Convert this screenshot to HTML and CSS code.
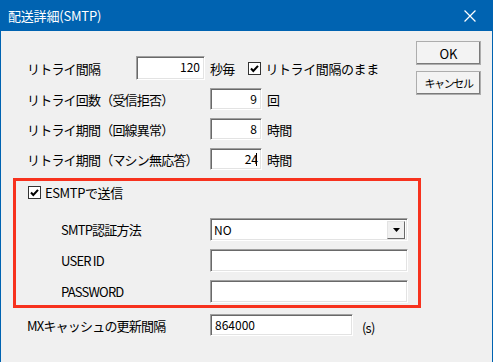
FILE: index.html
```html
<!DOCTYPE html>
<html lang="ja">

<head>
    <meta charset="UTF-8" />
    <title>配送詳細(SMTP)</title>
    <link rel="stylesheet" href="styles.css">
</head>

<body>
    <div class="window">
        <div class="titlebar">
            <span class="title">配送詳細(SMTP)</span>
            <svg class="close" width="11" height="11" viewBox="0 0 11 11">
                <path d="M0.5 0.5 L10.5 10.5 M10.5 0.5 L0.5 10.5" stroke="#fff" stroke-width="1.1" fill="none" />
            </svg>
        </div>

        <div class="content">
            <div class="top">
                <div class="rows">
                    <div class="row r1">
                        <span class="lbl w1">リトライ間隔</span>
                        <div class="field f1">120</div>
                        <span class="unit">秒毎</span>
                        <span class="check keep">
                            <svg width="13" height="13" viewBox="0 0 13 13">
                                <rect x="0.5" y="0.5" width="12" height="12" fill="#fff" stroke="#333" />
                                <path d="M3 6.5 L5.3 9 L10 3.8" stroke="#000" stroke-width="2" fill="none" />
                            </svg>
                            リトライ間隔のまま
                        </span>
                    </div>
                    <div class="row">
                        <span class="lbl w2">リトライ回数（受信拒否）</span>
                        <div class="field f2">9</div>
                        <span class="unit">回</span>
                    </div>
                    <div class="row">
                        <span class="lbl w2">リトライ期間（回線異常）</span>
                        <div class="field f2">8</div>
                        <span class="unit">時間</span>
                    </div>
                    <div class="row">
                        <span class="lbl w2">リトライ期間（マシン無応答）</span>
                        <div class="field f2">24<span class="caret"></span></div>
                        <span class="unit">時間</span>
                    </div>
                </div>

                <div class="buttons">
                    <button class="btn">OK</button>
                    <button class="btn small">キャンセル</button>
                </div>
            </div>

            <div class="esmtp">
                <span class="check">
                    <svg width="13" height="13" viewBox="0 0 13 13">
                        <rect x="0.5" y="0.5" width="12" height="12" fill="#fff" stroke="#333" />
                        <path d="M3 6.5 L5.3 9 L10 3.8" stroke="#000" stroke-width="2" fill="none" />
                    </svg>
                    ESMTPで送信
                </span>
                <div class="row sub first">
                    <span class="lbl w3">SMTP認証方法</span>
                    <div class="field wide select">
                        <span class="val">NO</span>
                        <span class="drop">
                            <svg width="7" height="4" viewBox="0 0 7 4"><path d="M0 0 H7 L3.5 4 Z" fill="#000" /></svg>
                        </span>
                    </div>
                </div>
                <div class="row sub">
                    <span class="lbl w3">USER ID</span>
                    <div class="field wide"></div>
                </div>
                <div class="row sub">
                    <span class="lbl w3">PASSWORD</span>
                    <div class="field wide"></div>
                </div>
            </div>

            <div class="row mx">
                <span class="lbl w2">MXキャッシュの更新間隔</span>
                <div class="field f3">864000</div>
                <span class="unit sec">(s)</span>
            </div>
        </div>
    </div>
</body>

</html>
```

FILE: styles.css
```css
* {
    margin: 0;
    padding: 0;
    box-sizing: border-box;
}

body {
    width: 493px;
    height: 362px;
    overflow: hidden;
    background: #f0f0f0;
    font-family: "Noto Sans CJK JP", "Noto Sans", sans-serif;
    font-size: 13px;
    color: #000;
}

.window {
    width: 493px;
    height: 362px;
    border-left: 1px solid #0063b1;
    border-right: 1px solid #0063b1;
    background: #f0f0f0;
}

.titlebar {
    height: 31px;
    margin: 0 -1px;
    background: #0063b1;
    display: flex;
    align-items: center;
    justify-content: space-between;
    padding: 0 17px 0 8px;
}

.title {
    color: #fff;
    font-size: 13px;
    letter-spacing: -0.2px;
}

.close {
    width: 12px;
    height: 12px;
}

.content {
    padding: 10px 11px 0 0;
}

.top {
    display: flex;
    justify-content: space-between;
}

.rows {
    margin-top: 15px;
    padding-left: 26px;
    display: flex;
    flex-direction: column;
    gap: 8px;
}

.row {
    display: flex;
    align-items: center;
    height: 22px;
}

.row.r1 {
    height: 24px;
}

.lbl {
    letter-spacing: -0.8px;
    white-space: nowrap;
}

.w1 {
    width: 109px;
}

.w2 {
    width: 183px;
}

.w3 {
    width: 149px;
}

.field {
    height: 100%;
    background: #fff;
    border: 1px solid;
    border-color: #a0a0a0 #fff #fff #a0a0a0;
    box-shadow: inset 1px 1px #696969, inset -1px -1px #e3e3e3;
    font-size: 12px;
    line-height: 18px;
    padding: 1px 4px 0;
    text-align: right;
}

.f1 {
    width: 69px;
}

.f2 {
    width: 52px;
}

.f3 {
    width: 143px;
    text-align: left;
    padding-left: 4px;
}

.caret {
    display: inline-block;
    width: 1px;
    height: 13px;
    background: #000;
    vertical-align: -2px;
    margin-left: -2px;
}

.unit {
    margin-left: 5px;
    letter-spacing: -0.8px;
}

.check {
    display: flex;
    align-items: center;
    gap: 4px;
    letter-spacing: -0.4px;
}

.keep {
    margin-left: 14px;
}

.buttons {
    display: flex;
    flex-direction: column;
    gap: 6px;
}

.btn {
    width: 65px;
    height: 24px;
    background: #f3f3f3;
    border: 1px solid #adadad;
    box-shadow: inset -1px -1px #7a7a7a;
    font-family: "Noto Sans CJK JP", "Noto Sans", sans-serif;
    font-size: 13px;
    color: #000;
}

.btn.small {
    font-size: 11px;
    letter-spacing: -1.4px;
}

.esmtp {
    margin: 8px 0 0 12px;
    width: 408px;
    height: 130px;
    border: 3px solid #f7321e;
    padding: 3px 0 0 12px;
}

.esmtp .check {
    height: 16px;
}

.sub {
    height: 23px;
    margin-left: 33px;
    margin-top: 8px;
}

.sub.first {
    margin-top: 18px;
}

.wide {
    width: 198px;
}

.select {
    display: flex;
    justify-content: space-between;
    align-items: center;
    padding: 0 2px 0 3px;
    text-align: left;
}

.drop {
    width: 18px;
    height: 18px;
    background: #f0f0f0;
    border: 1px solid #e3e3e3;
    border-right-color: #696969;
    border-bottom-color: #696969;
    display: flex;
    align-items: center;
    justify-content: center;
}

.mx {
    margin: 6px 0 0 26px;
}

.sec {
    margin-left: 9px;
    margin-top: 4px;
}
```
